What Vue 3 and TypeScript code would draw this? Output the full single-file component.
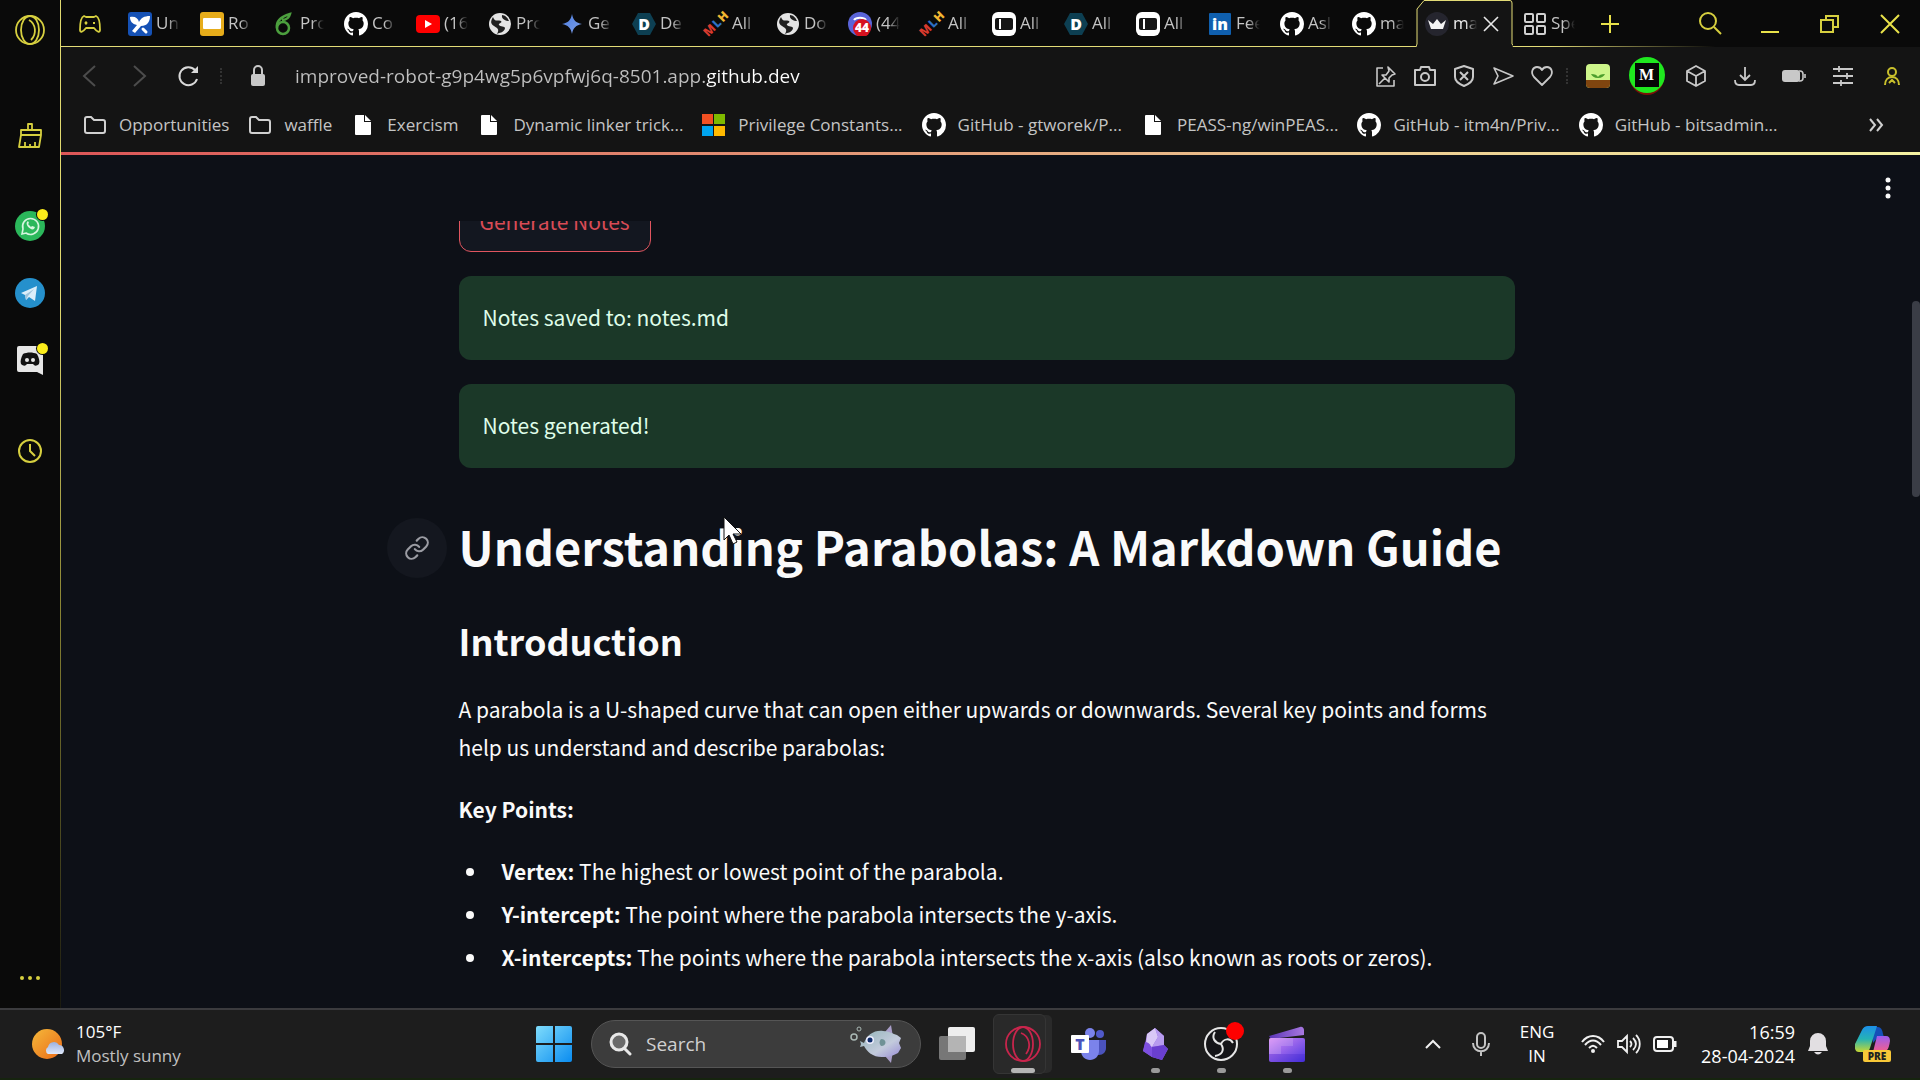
<script setup lang="ts">
interface Tab {
  icon: string
  label: string
}

interface Bookmark {
  icon: string
  label: string
}

interface Tool {
  icon: string
  name: string
}

const tabs: Tab[] = [
  { icon: 'unstop', label: 'Un' },
  { icon: 'slides', label: 'Ro' },
  { icon: 'overleaf', label: 'Pro' },
  { icon: 'github', label: 'Co' },
  { icon: 'youtube', label: '(16' },
  { icon: 'globe', label: 'Pro' },
  { icon: 'gemini', label: 'Ge' },
  { icon: 'devfolio', label: 'De' },
  { icon: 'mlh', label: 'All' },
  { icon: 'globe', label: 'Do' },
  { icon: 'discord-badge', label: '(44' },
  { icon: 'mlh', label: 'All' },
  { icon: 'panel', label: 'All' },
  { icon: 'devfolio', label: 'All' },
  { icon: 'panel', label: 'All' },
  { icon: 'linkedin', label: 'Fee' },
  { icon: 'github', label: 'Asl' },
  { icon: 'github', label: 'ma' },
]

// Letters that sit on top of a favicon's shape.
const marks: Record<string, string[]> = {
  devfolio: ['D'],
  mlh: ['M', 'L', 'H'],
  'discord-badge': ['44'],
  linkedin: ['in'],
  medium: ['M'],
  teams: ['T'],
}

const bookmarks: Bookmark[] = [
  { icon: 'folder', label: 'Opportunities' },
  { icon: 'folder', label: 'waffle' },
  { icon: 'file', label: 'Exercism' },
  { icon: 'file', label: 'Dynamic linker trick...' },
  { icon: 'microsoft', label: 'Privilege Constants...' },
  { icon: 'github', label: 'GitHub - gtworek/P...' },
  { icon: 'file', label: 'PEASS-ng/winPEAS...' },
  { icon: 'github', label: 'GitHub - itm4n/Priv...' },
  { icon: 'github', label: 'GitHub - bitsadmin...' },
]

const pageTools: Tool[] = [
  { icon: 'pin', name: 'Pin page' },
  { icon: 'camera', name: 'Snapshot' },
  { icon: 'shield', name: 'Ad blocker' },
  { icon: 'send', name: 'My Flow' },
  { icon: 'heart', name: 'Add to bookmarks' },
]

const extensions: Tool[] = [
  { icon: 'plant', name: 'Forest' },
  { icon: 'medium', name: 'Medium' },
  { icon: 'cube', name: 'Extensions' },
  { icon: 'download', name: 'Downloads' },
  { icon: 'battery', name: 'Battery saver' },
  { icon: 'sliders', name: 'Easy setup' },
  { icon: 'user', name: 'Profile' },
]

const taskApps = [
  { icon: 'taskview', name: 'Task view', state: '' },
  { icon: 'opera-red', name: 'Opera GX', state: 'active' },
  { icon: 'teams', name: 'Teams', state: '' },
  { icon: 'obsidian', name: 'Obsidian', state: 'open' },
  { icon: 'obs', name: 'OBS Studio', state: 'open' },
  { icon: 'clipchamp', name: 'Clipchamp', state: 'open' },
]

const keyPoints = [
  { term: 'Vertex:', text: 'The highest or lowest point of the parabola.' },
  { term: 'Y-intercept:', text: 'The point where the parabola intersects the y-axis.' },
  { term: 'X-intercepts:', text: 'The points where the parabola intersects the x-axis (also known as roots or zeros).' },
]

const address = 'improved-robot-g9p4wg5p6vpfwj6q-8501.app.github.dev'
</script>

<template>
  <div class="desktop">
    <svg class="sprite" aria-hidden="true">
      <defs>
        <linearGradient id="g-win" x1="0" y1="0" x2="1" y2="1">
          <stop offset="0" stop-color="#7fdcfb" /><stop offset="1" stop-color="#0a8cf0" />
        </linearGradient>
        <linearGradient id="g-sun" x1="0" y1="0" x2="1" y2="1">
          <stop offset="0" stop-color="#f5b93a" /><stop offset="1" stop-color="#ea6a18" />
        </linearGradient>
        <linearGradient id="g-cloud" x1="0" y1="0" x2="0" y2="1">
          <stop offset="0" stop-color="#9db2dd" /><stop offset="1" stop-color="#dfe8fb" />
        </linearGradient>
        <linearGradient id="g-gem" x1="0" y1="0" x2="1" y2="1">
          <stop offset="0" stop-color="#4a7de0" /><stop offset="1" stop-color="#7f9fe8" />
        </linearGradient>
        <linearGradient id="g-fish" x1="0" y1="0" x2="1" y2="1">
          <stop offset="0" stop-color="#93b4b8" /><stop offset="0.6" stop-color="#c3cbdc" /><stop offset="1" stop-color="#9a8fd6" />
        </linearGradient>
        <linearGradient id="g-clip" x1="0" y1="0" x2="1" y2="1">
          <stop offset="0" stop-color="#d88cf5" /><stop offset="1" stop-color="#4a35e0" />
        </linearGradient>
        <linearGradient id="g-clap" x1="0" y1="0" x2="1" y2="0">
          <stop offset="0" stop-color="#5b35b8" /><stop offset="1" stop-color="#a878e0" />
        </linearGradient>
        <linearGradient id="g-cop" x1="0" y1="0" x2="0" y2="1">
          <stop offset="0" stop-color="#1c8fe8" /><stop offset="0.5" stop-color="#25b3b5" /><stop offset="1" stop-color="#c8d832" />
        </linearGradient>
        <linearGradient id="g-cop2" x1="0" y1="0" x2="0" y2="1">
          <stop offset="0" stop-color="#9a5cf0" /><stop offset="1" stop-color="#f5608a" />
        </linearGradient>
      </defs>

      <symbol id="unstop" viewBox="0 0 24 24">
        <rect width="24" height="24" rx="3" fill="#1551b5" />
        <path d="M2 5c5-1 8 1 9 5 2-4 5-6 11-6 0 6-3 10-9 10l-6 7-3-2 5-6C4 12 2 9 2 5z" fill="#fff" />
        <path d="M15 17l3 3" stroke="#fff" stroke-width="3" stroke-linecap="round" />
      </symbol>
      <symbol id="slides" viewBox="0 0 24 24">
        <rect width="24" height="24" rx="3" fill="#e6ac1a" />
        <rect x="3" y="6" width="18" height="11" rx="1" fill="#fff" />
      </symbol>
      <symbol id="overleaf" viewBox="0 0 24 24">
        <g fill="none" stroke="#4c9f3e" stroke-width="2.500">
          <circle cx="11" cy="16" r="6" />
          <path d="M5 16C4 10 8 5 18 2c-1 4-4 6-8 6" />
        </g>
      </symbol>
      <symbol id="github" viewBox="0 0 16 16">
        <path fill="#fff" d="M8 0C3.58 0 0 3.58 0 8c0 3.54 2.29 6.53 5.47 7.59.4.07.55-.17.55-.38 0-.19-.01-.82-.01-1.49-2.01.37-2.53-.49-2.69-.94-.09-.23-.48-.94-.82-1.13-.28-.15-.68-.52-.01-.53.63-.01 1.08.58 1.23.82.72 1.21 1.87.87 2.33.66.07-.52.28-.87.51-1.07-1.78-.2-3.64-.89-3.64-3.95 0-.87.31-1.59.82-2.15-.08-.2-.36-1.02.08-2.12 0 0 .67-.21 2.2.82.64-.18 1.32-.27 2-.27s1.36.09 2 .27c1.53-1.04 2.2-.82 2.2-.82.44 1.1.16 1.92.08 2.12.51.56.82 1.27.82 2.15 0 3.07-1.87 3.75-3.65 3.95.29.25.54.73.54 1.48 0 1.07-.01 1.93-.01 2.2 0 .21.15.46.55.38A8.01 8.01 0 0 0 16 8c0-4.42-3.58-8-8-8z" />
      </symbol>
      <symbol id="youtube" viewBox="0 0 24 24">
        <rect y="3" width="24" height="18" rx="4" fill="#f00" />
        <path d="M9 8l7 4-7 4z" fill="#fff" />
      </symbol>
      <symbol id="globe" viewBox="0 0 24 24">
        <circle cx="12" cy="12" r="11" fill="#e4e4e4" />
        <path d="M5 5c2 6 6 2 8 4s-3 2-2 4 6 1 6 3-3 5-6 5l-2 1c3-5 0-6-3-8S2 10 5 5zM14 3c3 0 6 3 7 6-3 0-8-2-7-6z" fill="#202020" />
      </symbol>
      <symbol id="gemini" viewBox="0 0 24 24">
        <path d="M12 2c1 6 4 9 10 10-6 1-9 4-10 10-1-6-4-9-10-10 6-1 9-4 10-10z" fill="url(#g-gem)" />
      </symbol>
      <symbol id="devfolio" viewBox="0 0 24 24">
        <path d="M6 1h12l6 11-6 11H6L0 12z" fill="#0d3f52" />
      </symbol>
      <symbol id="mlh" viewBox="0 0 24 24"></symbol>
      <symbol id="discord-badge" viewBox="0 0 24 24">
        <circle cx="12" cy="12" r="12" fill="#5a64d8" />
        <path d="M6 8c2-3 10-3 12 0" stroke="#fff" stroke-width="2" fill="none" />
        <circle cx="14" cy="16" r="9" fill="#d6121f" />
      </symbol>
      <symbol id="panel" viewBox="0 0 24 24">
        <rect width="24" height="24" rx="6" fill="#fff" />
        <rect x="3" y="6" width="18" height="12" rx="2" fill="#151515" />
        <path d="M8 7v10" stroke="#fff" stroke-width="2" />
      </symbol>
      <symbol id="linkedin" viewBox="0 0 24 24">
        <rect x="1" y="1" width="22" height="22" rx="1" fill="#0f5fae" />
      </symbol>
      <symbol id="crown" viewBox="0 0 24 24">
        <circle cx="12" cy="12" r="12" fill="#25252e" />
        <path d="M3 8l5 4 4-5 4 5 5-4-3 9H6z" fill="#f4f4f4" />
      </symbol>
      <symbol id="speed" viewBox="0 0 24 24">
        <g fill="none" stroke="#cfcfcf" stroke-width="2">
          <rect x="2" y="2" width="8" height="8" rx="1" /><rect x="14" y="2" width="8" height="8" rx="1" />
          <rect x="2" y="14" width="8" height="8" rx="1" /><rect x="14" y="14" width="8" height="8" rx="1" />
        </g>
      </symbol>

      <symbol id="folder" viewBox="0 0 24 24">
        <path d="M2 6a2 2 0 0 1 2-2h4l3 3h9a2 2 0 0 1 2 2v9a2 2 0 0 1-2 2H4a2 2 0 0 1-2-2z" fill="none" stroke="#d0d0d0" stroke-width="2" />
      </symbol>
      <symbol id="file" viewBox="0 0 24 24">
        <path d="M5 2h8v7h7v12a1 1 0 0 1-1 1H5a1 1 0 0 1-1-1V3a1 1 0 0 1 1-1z" fill="#fff" />
        <path d="M14 2l6 6h-6z" fill="#fff" />
      </symbol>
      <symbol id="microsoft" viewBox="0 0 24 24">
        <path d="M0 1h11v10H0z" fill="#f25022" /><path d="M12 1h11v10H12z" fill="#7fba00" />
        <path d="M0 13h11v10H0z" fill="#00a4ef" /><path d="M12 13h11v10H12z" fill="#ffb900" />
      </symbol>

      <symbol id="pin" viewBox="0 0 24 24">
        <g fill="none" stroke="#c8c8c8" stroke-width="1.600" stroke-linejoin="round">
          <path d="M9 4H3v18h17v-6" /><path d="M14 3l7 7-3 1-3 3v4l-7-7h4l3-4zM11 14l-6 6" />
        </g>
      </symbol>
      <symbol id="camera" viewBox="0 0 24 24">
        <g fill="none" stroke="#c8c8c8" stroke-width="2" stroke-linejoin="round">
          <path d="M2 6h5l1-3h8l1 3h5v15H2z" /><circle cx="12" cy="13" r="4" />
        </g>
      </symbol>
      <symbol id="shield" viewBox="0 0 24 24">
        <g fill="none" stroke="#c8c8c8" stroke-width="2" stroke-linejoin="round">
          <path d="M12 2l9 3v8c0 4-4 7-9 9-5-2-9-5-9-9V5z" /><path d="M8 8l8 8M16 8l-8 8" />
        </g>
      </symbol>
      <symbol id="send" viewBox="0 0 24 24">
        <path d="M3 4l19 8-19 8 4-8z" fill="none" stroke="#c8c8c8" stroke-width="1.600" stroke-linejoin="round" />
      </symbol>
      <symbol id="heart" viewBox="0 0 24 24">
        <path d="M12 21L4 13C0 8 3 3 7 3c2 0 4 1 5 3 1-2 3-3 5-3 4 0 7 5 3 10z" fill="none" stroke="#c8c8c8" stroke-width="1.800" stroke-linejoin="round" />
      </symbol>
      <symbol id="plant" viewBox="0 0 24 24">
        <rect width="24" height="24" rx="4" fill="#cdf58a" />
        <path d="M0 16h24v4a4 4 0 0 1-4 4H4a4 4 0 0 1-4-4z" fill="#80450f" />
        <path d="M12 14c-4 0-6-2-7-4 4 0 6 1 7 3 1-2 3-3 7-3-1 2-3 4-7 4z" fill="#4b9d2c" />
      </symbol>
      <symbol id="medium" viewBox="0 0 36 38">
        <circle cx="18" cy="21" r="17" fill="#c01000" opacity="0.600" />
        <circle cx="18" cy="18" r="18" fill="#1fe81f" />
        <rect x="6" y="6" width="24" height="24" fill="#060606" />
      </symbol>
      <symbol id="cube" viewBox="0 0 24 24">
        <path d="M12 2l9 5v10l-9 5-9-5V7zM3 7l9 5 9-5M12 12v10" fill="none" stroke="#c8c8c8" stroke-width="1.800" stroke-linejoin="round" />
      </symbol>
      <symbol id="download" viewBox="0 0 24 24">
        <path d="M12 3v12M7 11l5 5 5-5M2 16c0 3 1 5 4 5h12c3 0 4-2 4-5" fill="none" stroke="#c8c8c8" stroke-width="1.800" />
      </symbol>
      <symbol id="battery" viewBox="0 0 24 24">
        <rect y="6" width="18" height="12" rx="3" fill="#c8c8c8" />
        <path d="M17 7h1q3 0 3 3v4q0 3-3 3h-1M23 10v4" fill="none" stroke="#c8c8c8" stroke-width="1.600" />
      </symbol>
      <symbol id="sliders" viewBox="0 0 24 24">
        <path d="M2 5h20M2 12h20M2 19h20M8 2v6M16 9v6M10 16v6" fill="none" stroke="#c8c8c8" stroke-width="1.800" />
      </symbol>
      <symbol id="user" viewBox="0 0 24 24">
        <g fill="none" stroke="#c9c02c" stroke-width="2">
          <circle cx="12" cy="8" r="4" /><path d="M5 21c0-5 3-8 7-8s7 3 7 8M9 19l3-3 3 3" />
        </g>
      </symbol>

      <symbol id="taskview" viewBox="0 0 36 36">
        <rect x="9" y="1" width="27" height="25" rx="2" fill="#eee" />
        <rect y="10" width="27" height="24" rx="2" fill="#777" />
        <path d="M9 10h18v16H9z" fill="#b4b4b4" />
      </symbol>
      <symbol id="opera-red" viewBox="0 0 36 36">
        <g fill="none" stroke="#c8254c" stroke-width="1.800">
          <circle cx="18" cy="18" r="17" /><ellipse cx="18" cy="18" rx="10" ry="17" />
          <path d="M16 7c8 3 11 13 5 21" />
        </g>
      </symbol>
      <symbol id="teams" viewBox="0 0 36 36">
        <circle cx="19" cy="7" r="5" fill="#7b83eb" /><circle cx="29" cy="8" r="4" fill="#5059c9" />
        <path d="M24 14h11v8c0 4-3 7-7 7h-4z" fill="#4b53bc" />
        <path d="M10 14h18v11c0 5-4 9-9 9s-9-4-9-9z" fill="#7b83eb" />
        <rect y="9" width="18" height="18" rx="1" fill="#fff" />
      </symbol>
      <symbol id="obsidian" viewBox="0 0 36 36">
        <path d="M18 2l9 8v9l4 4-6 11-10-3-9-6 2-7 2-10z" fill="#8d64e0" />
        <path d="M18 2l3 9-6 10-6-4 1-9z" fill="#d9c8f7" />
        <path d="M18 2l9 8v9l-12 2 6-10z" fill="#b79bef" />
        <path d="M8 16c5 0 8 6 7 15l-9-6z" fill="#7d4fe0" />
        <path d="M15 21l12-2 4 4-6 11-10-3z" fill="#6a3fd0" />
      </symbol>
      <symbol id="obs" viewBox="0 0 36 36" overflow="visible">
        <circle cx="18" cy="18" r="16" fill="#151518" stroke="#e6e6e6" stroke-width="2" />
        <path d="M12 6c-4 6 0 11 6 12 3-6 9-6 12-1M18 18c4 6 1 11-6 12" fill="none" stroke="#e6e6e6" stroke-width="2" />
        <circle cx="32" cy="5" r="9" fill="red" />
      </symbol>
      <symbol id="clipchamp" viewBox="0 0 36 36">
        <path d="M0 10l31-9c2-1 4 1 4 3v5L2 13z" fill="url(#g-clap)" />
        <rect y="12" width="36" height="24" rx="2" fill="url(#g-clip)" />
        <path d="M0 12h24v8H12v8H0z" fill="#fff" fill-opacity="0.150" />
        <path d="M0 28h36v6q0 2-2 2H2q-2 0-2-2z" fill="#2a10c0" fill-opacity="0.200" />
      </symbol>
    </svg>

    <div class="browser">
      <nav class="sidebar" aria-label="Browser sidebar">
        <button class="side logo" aria-label="Opera GX menu">
          <svg width="32" height="32" viewBox="0 0 32 32" fill="none" stroke="#d6cf3f" stroke-width="1.800">
            <circle cx="16" cy="16" r="14" /><ellipse cx="16" cy="16" rx="9" ry="14" /><path d="M15 6c7 4 8 14 2 20" />
          </svg>
        </button>
        <button class="side broom" aria-label="GX Cleaner">
          <svg width="26" height="26" viewBox="0 0 26 26" fill="none" stroke="#d6cf3f" stroke-width="1.800" stroke-linejoin="round">
            <path d="M11 7V1h4v6M4 7h20v5H4zM4 12L2 24h20l2-12M8 24v-5M13 24v-3M18 24v-5" />
          </svg>
        </button>
        <button class="side" aria-label="WhatsApp">
          <svg width="30" height="30" viewBox="0 0 30 30">
            <circle cx="15" cy="15" r="15" fill="#2bb85b" />
            <path d="M7 23l1-5a8 8 0 1 1 3 4z" fill="none" stroke="#d7f5df" stroke-width="1.600" />
            <path d="M12 11c-2 3 4 9 7 7l1-2-3-1-1 1-3-3 1-1-1-2z" fill="#d7f5df" />
          </svg>
          <i class="notice"></i>
        </button>
        <button class="side" aria-label="Telegram">
          <svg width="30" height="30" viewBox="0 0 30 30">
            <circle cx="15" cy="15" r="15" fill="#2590cc" />
            <path d="M6 15l16-7-2 15-6-4-3 3-1-5z" fill="#dceefa" /><path d="M10 17l9-6-6 7-2 4z" fill="#9fc4dc" />
          </svg>
        </button>
        <button class="side" aria-label="Discord">
          <svg width="30" height="30" viewBox="0 0 30 30">
            <path d="M2 3a2 2 0 0 1 2-2h24v29l-6-3H4a2 2 0 0 1-2-2z" fill="#e6e6e6" />
            <path d="M8 9c4-2 10-2 14 0 2 4 3 7 2 10-2 2-4 2-5 1l-1-1h-6l-1 1c-1 1-3 1-5-1-1-3 0-6 2-10z" fill="#111" />
            <circle cx="12" cy="15" r="2" fill="#e6e6e6" /><circle cx="18" cy="15" r="2" fill="#e6e6e6" />
          </svg>
          <i class="notice"></i>
        </button>
        <button class="side clock" aria-label="History">
          <svg width="26" height="26" viewBox="0 0 26 26" fill="none" stroke="#d6cf3f" stroke-width="2">
            <circle cx="13" cy="13" r="11" /><path d="M13 6v7l5 5" />
          </svg>
        </button>
        <button class="side more" aria-label="Sidebar setup">
          <svg width="24" height="6" viewBox="0 0 24 6" fill="#d6cf3f">
            <circle cx="4" cy="3" r="2" /><circle cx="12" cy="3" r="2" /><circle cx="20" cy="3" r="2" />
          </svg>
        </button>
      </nav>

      <div class="window">
        <header class="tabstrip">
          <button class="corner" aria-label="GX Corner">
            <svg width="24" height="20" viewBox="0 0 24 20" fill="none" stroke="#d6cf3f" stroke-width="1.800" stroke-linejoin="round">
              <path d="M6 2l2 1h8l2-1c3 1 4 8 4 14 0 3-3 2-6-2H8c-3 4-6 5-6 2C2 10 3 3 6 2z" /><path d="M7 8l2 2M9 8l-2 2M15 9h2" />
            </svg>
          </button>
          <button v-for="(tab, i) in tabs" :key="i" class="tab">
            <span class="favicon" :class="tab.icon">
              <svg><use :href="'#' + tab.icon" /></svg>
              <span v-if="marks[tab.icon]" class="mark"><b v-for="m in marks[tab.icon]" :key="m">{{ m }}</b></span>
            </span>
            <span class="tab-label">{{ tab.label }}</span>
          </button>
          <div class="tab current">
            <svg class="outline" width="97" height="47" viewBox="0 0 97 47">
              <path d="M0 47V46.500H1V9L8 .5H94Q96 .5 96 3V45L97 47z" fill="#141414" />
              <path d="M-2 46.500H0L1 44V9L8 .5H94Q96 .5 96 3V44L98 46.500" fill="none" stroke="#e3dc77" />
            </svg>
            <span class="favicon"><svg><use href="#crown" /></svg></span>
            <span class="tab-label">ma</span>
            <button class="close-tab" aria-label="Close tab">
              <svg width="16" height="16" viewBox="0 0 16 16" stroke="#e8e8e8" stroke-width="1.600"><path d="M1 1l14 14M15 1L1 15" /></svg>
            </button>
          </div>
          <button class="tab">
            <span class="favicon"><svg><use href="#speed" /></svg></span>
            <span class="tab-label">Spe</span>
          </button>
          <button class="new-tab" aria-label="New tab">
            <svg width="20" height="20" viewBox="0 0 20 20" stroke="#e9e24a" stroke-width="2"><path d="M10 1v18M1 10h18" /></svg>
          </button>
          <div class="controls">
            <button aria-label="Search tabs">
              <svg width="24" height="24" viewBox="0 0 24 24" fill="none" stroke="#d6cf3f" stroke-width="2"><circle cx="10" cy="9" r="8" /><path d="M16 15l7 7" /></svg>
            </button>
            <button aria-label="Minimize">
              <svg width="24" height="24" viewBox="0 0 24 24" stroke="#e9e24a" stroke-width="2"><path d="M3 20h18" /></svg>
            </button>
            <button aria-label="Restore">
              <svg width="24" height="24" viewBox="0 0 24 24" fill="none" stroke="#d6cf3f" stroke-width="2"><path d="M3 8h12v12H3zM8 8V4h12v11h-5" /></svg>
            </button>
            <button aria-label="Close">
              <svg width="24" height="24" viewBox="0 0 24 24" stroke="#e9e24a" stroke-width="2"><path d="M3 3l18 18M21 3L3 21" /></svg>
            </button>
          </div>
        </header>

        <div class="toolbar">
          <div class="history-nav">
            <button aria-label="Back">
              <svg width="24" height="24" viewBox="0 0 24 24" fill="none" stroke="#4c4c4c" stroke-width="2"><path d="M17 2L6 12l11 10" /></svg>
            </button>
            <button aria-label="Forward">
              <svg width="24" height="24" viewBox="0 0 24 24" fill="none" stroke="#4c4c4c" stroke-width="2"><path d="M7 2l11 10L7 22" /></svg>
            </button>
            <button aria-label="Reload">
              <svg width="24" height="24" viewBox="0 0 24 24" fill="none" stroke="#d8d8d8" stroke-width="2"><path d="M21 15a9 9 0 1 1-2-9" /><path d="M15 9l7-7v7z" fill="#d8d8d8" stroke="none" /></svg>
            </button>
          </div>
          <span class="divider"></span>
          <svg class="lock" width="24" height="24" viewBox="0 0 24 24"><path d="M8 11V6a4 4 0 0 1 8 0v5" fill="none" stroke="#c8c8c8" stroke-width="2" /><rect x="5" y="10" width="14" height="12" rx="2" fill="#c8c8c8" /></svg>
          <input class="address" type="text" :value="address" aria-label="Address" />
          <div class="page-tools">
            <button v-for="t in pageTools" :key="t.icon" :aria-label="t.name"><svg><use :href="'#' + t.icon" /></svg></button>
          </div>
          <span class="divider near"></span>
          <div class="extensions">
            <button v-for="t in extensions" :key="t.icon" :aria-label="t.name" :class="t.icon">
              <svg><use :href="'#' + t.icon" /></svg>
              <span v-if="marks[t.icon]" class="mark"><b v-for="m in marks[t.icon]" :key="m">{{ m }}</b></span>
            </button>
          </div>
        </div>

        <nav class="bookmarks" aria-label="Bookmarks">
          <a v-for="b in bookmarks" :key="b.label" href="#" class="bookmark">
            <svg><use :href="'#' + b.icon" /></svg><span>{{ b.label }}</span>
          </a>
          <button class="overflow" aria-label="More bookmarks">
            <svg width="16" height="14" viewBox="0 0 16 14" fill="none" stroke="#d0d0d0" stroke-width="2"><path d="M2 1l5 6-5 6M9 1l5 6-5 6" /></svg>
          </button>
        </nav>
        <div class="rainbow"></div>

        <div class="viewport">
          <div class="app-page">
            <div class="app-header">
              <button aria-label="Main menu">
                <svg width="6" height="22" viewBox="0 0 6 22" fill="#fafafa"><circle cx="3" cy="3" r="2.500" /><circle cx="3" cy="11" r="2.500" /><circle cx="3" cy="19" r="2.500" /></svg>
              </button>
            </div>
            <div class="scroller">
              <main class="notes">
                <button class="generate">Generate Notes</button>
                <div class="alert" role="alert">Notes saved to: notes.md</div>
                <div class="alert" role="alert">Notes generated!</div>
                <h1>
                  <a class="anchor" href="#" aria-label="Link to heading">
                    <svg width="26" height="26" viewBox="0 0 24 24" fill="none" stroke="#9b9ca3" stroke-width="2" stroke-linecap="round" stroke-linejoin="round"><path d="M10 13a5 5 0 0 0 7.540.540l3-3a5 5 0 0 0-7.070-7.070l-1.720 1.710" /><path d="M14 11a5 5 0 0 0-7.540-.540l-3 3a5 5 0 0 0 7.070 7.070l1.710-1.710" /></svg>
                  </a>
                  Understanding Parabolas: A Markdown Guide
                  <svg class="cursor" width="20" height="30" viewBox="0 0 20 30"><path d="M1 1v23l5-5 4 9 4-2-4-8h8z" fill="#fff" stroke="#111" /></svg>
                </h1>
                <h2>Introduction</h2>
                <p>A parabola is a U-shaped curve that can open either upwards or downwards. Several key points and forms help us understand and describe parabolas:</p>
                <p><strong>Key Points:</strong></p>
                <ul>
                  <li v-for="k in keyPoints" :key="k.term"><strong>{{ k.term }}</strong> {{ k.text }}</li>
                </ul>
              </main>
            </div>
          </div>
          <div class="scrollbar"><div class="thumb"></div></div>
        </div>
      </div>
    </div>

    <footer class="taskbar">
      <button class="weather">
        <svg width="36" height="32" viewBox="0 0 36 32">
          <circle cx="16" cy="16" r="15" fill="url(#g-sun)" />
          <path d="M17 26a4 4 0 0 1 0-7 6 6 0 0 1 11-2 5 5 0 0 1 3 9z" fill="url(#g-cloud)" />
        </svg>
        <span class="stack"><span>105°F</span><span class="dim">Mostly sunny</span></span>
      </button>

      <div class="dock">
        <button class="start" aria-label="Start">
          <svg width="36" height="36" viewBox="0 0 36 36"><path d="M2 0h15v17H0V2q0-2 2-2zM19 0h15q2 0 2 2v15H19zM0 19h17v17H2q-2 0-2-2zM19 19h17v15q0 2-2 2H19z" fill="url(#g-win)" /></svg>
        </button>
        <label class="search">
          <svg width="24" height="24" viewBox="0 0 24 24" fill="#6a6a6a" stroke="#e8e8e8" stroke-width="3" stroke-linecap="round"><circle cx="11" cy="10" r="8" /><path d="M17 17l5 5" /></svg>
          <input type="text" placeholder="Search" aria-label="Search" />
          <svg width="52" height="38" viewBox="0 0 52 38">
            <circle cx="4" cy="12" r="3" fill="none" stroke="#a9b8b4" stroke-width="1.500" /><circle cx="9" cy="4" r="2" fill="none" stroke="#a9b8b4" />
            <path d="M35 7l6-7 2 12zM35 31l6 7 2-12z" fill="#a99ec9" />
            <path d="M10 16l4 2c3-8 10-13 19-12 6 0 10 3 14 4l4 3-2 5 2 5-3 5c-4 2-8 4-14 4-10 1-17-5-20-11l-4 1 1-3z" fill="url(#g-fish)" />
            <path d="M31 14c6 0 6 7 0 7-2-2-2-5 0-7z" fill="#6f9296" />
            <circle cx="20" cy="15" r="4" fill="#eef" /><circle cx="20" cy="15" r="2.500" fill="#0c2a6a" />
          </svg>
        </label>
        <div class="apps">
          <button v-for="a in taskApps" :key="a.icon" class="task" :class="[a.state, a.icon]" :aria-label="a.name">
            <svg><use :href="'#' + a.icon" /></svg>
            <span v-if="marks[a.icon]" class="mark"><b v-for="m in marks[a.icon]" :key="m">{{ m }}</b></span>
          </button>
        </div>
      </div>

      <div class="tray">
        <button aria-label="Hidden icons"><svg width="18" height="12" viewBox="0 0 18 12" fill="none" stroke="#f0f0f0" stroke-width="2"><path d="M2 10l7-7 7 7" /></svg></button>
        <button class="mic" aria-label="Microphone"><svg width="20" height="26" viewBox="0 0 20 26" fill="none" stroke="#c4c4c4" stroke-width="2"><rect x="6" y="2" width="8" height="15" rx="4" /><path d="M2 12c0 11 16 11 16 0M10 20v5" /></svg></button>
        <button class="stack lang"><span>ENG</span><span>IN</span></button>
        <button class="status" aria-label="Network, volume and battery">
          <svg width="24" height="20" viewBox="0 0 24 20" fill="none" stroke="#f0f0f0" stroke-width="2"><path d="M1 8c6-8 16-8 22 0M4 11c5-6 11-6 16 0M8 14c3-3 5-3 8 0" /><circle cx="12" cy="17" r="2" fill="#f0f0f0" stroke="none" /></svg>
          <svg width="24" height="22" viewBox="0 0 24 22" fill="none" stroke="#f0f0f0" stroke-width="1.800"><path d="M1 8h4l5-5v16l-5-5H1zM13 8c2 2 2 4 0 6M16 5c4 4 4 8 0 12M19 2c5 5 5 13 0 18" /></svg>
          <svg width="24" height="18" viewBox="0 0 24 18"><rect x="1" y="2" width="19" height="14" rx="3" fill="none" stroke="#f0f0f0" stroke-width="2" /><rect x="4" y="5" width="11" height="8" fill="#fff" /><path d="M22 6v6" stroke="#f0f0f0" stroke-width="3" /></svg>
        </button>
        <button class="stack clock-text"><span>16:59</span><span>28-04-2024</span></button>
        <button class="bell" aria-label="Notifications"><svg width="20" height="24" viewBox="0 0 20 24" fill="#e2dfe2"><path d="M0 19l2-5V9a8 8 0 0 1 16 0v5l2 5zM6 20h8q-4 5-8 0z" /></svg></button>
        <button class="copilot" aria-label="Copilot preview">
          <svg width="36" height="36" viewBox="0 0 36 36">
            <path d="M16 1h7q4 0 5 7l1 3h-6l-5 6z" fill="#1450b8" />
            <path d="M22 10h9q4 0 4 5-1 7-3 9l-14 2z" fill="url(#g-cop2)" />
            <path d="M7 4q2-4 6-4h9l-7 22q-1 4-6 4H4q-5 0-4-8z" fill="url(#g-cop)" />
            <rect x="8" y="24" width="28" height="12" rx="2" fill="#f8c838" />
            <text x="22" y="34" text-anchor="middle" font-family="Open Sans, sans-serif" font-size="10" font-weight="800" fill="#222">PRE</text>
          </svg>
        </button>
      </div>
    </footer>
  </div>
</template>

<style>
body {
  background: #0a0a0a;
}
</style>

<style scoped>
.desktop {
  display: flex;
  flex-direction: column;
  height: 100vh;
  overflow: hidden;
  font-family: 'Open Sans', 'Noto Sans', sans-serif;
  font-size: 17px;
  color: #c4c4c4;
}
.desktop *,
.desktop *::before,
.desktop *::after {
  box-sizing: border-box;
}
.sprite {
  position: absolute;
  width: 0;
  height: 0;
}
svg {
  display: block;
  flex: none;
}
button {
  display: flex;
  align-items: center;
  justify-content: center;
  padding: 0;
  border: 0;
  background: none;
  font: inherit;
  color: inherit;
}
.browser {
  display: flex;
  flex: 1;
  min-height: 0;
}

.sidebar {
  display: flex;
  flex-direction: column;
  width: 61px;
  flex: none;
  background: #0a0a0a;
  border-right: 1px solid;
  border-image: linear-gradient(#e0d970 30%, #8a8534 60%, #1a1a10) 1;
}
.side {
  position: relative;
  width: 60px;
  height: 67px;
}
.logo {
  height: 60px;
}
.broom {
  margin: 42px 0 23px;
}
.clock {
  margin-top: 24px;
}
.more {
  margin-top: auto;
  height: 60px;
}
.notice {
  position: absolute;
  top: 17px;
  right: 12px;
  width: 11px;
  height: 11px;
  border-radius: 50%;
  background: #fbec1b;
  box-shadow: 0 0 0 1px #0a0a0a;
}

.window {
  display: flex;
  flex-direction: column;
  flex: 1;
  min-width: 0;
  background: #141414;
}
.tabstrip {
  display: flex;
  align-items: center;
  height: 47px;
  flex: none;
  background:
    linear-gradient(90deg, #e3dc77 80%, #e3dc7700 89%) bottom / 100% 1px no-repeat,
    #0a0a0a;
}
.corner {
  width: 57px;
}
.tab {
  position: relative;
  display: flex;
  align-items: center;
  justify-content: flex-start;
  gap: 4px;
  flex: 0 1 72px;
  height: 46px;
  padding-left: 10px;
  overflow: hidden;
}
.favicon {
  position: relative;
  display: block;
  flex: none;
  width: 24px;
  height: 24px;
}
.favicon svg {
  width: 24px;
  height: 24px;
}
.mark {
  position: absolute;
  inset: 0;
  display: flex;
  align-items: center;
  justify-content: center;
  color: #fff;
  font-weight: 700;
  font-size: 16px;
  line-height: 24px;
}
.discord-badge .mark {
  inset: 4px 0 -4px 4px;
  font-size: 12px;
}
.mlh .mark {
  gap: 1px;
  rotate: -45deg;
  font-size: 12px;
  font-weight: 800;
}
.mlh b:nth-child(1) {
  color: #d93a2e;
}
.mlh b:nth-child(2) {
  color: #2d6fc4;
}
.mlh b:nth-child(3) {
  color: #f2b632;
}
.tab-label {
  position: relative;
  width: 24px;
  overflow: hidden;
  text-align: left;
  line-height: 24px;
  padding-bottom: 2px;
  white-space: nowrap;
  mask-image: linear-gradient(90deg, #000 50%, #0003 90%, transparent);
}
.current {
  flex: 0 0 97px;
  height: 47px;
  margin-left: 2px;
  padding-left: 9px;
  overflow: visible;
  color: #f0f0f0;
}
.outline {
  position: absolute;
  inset: 0;
}
.close-tab {
  position: relative;
  margin-left: 2px;
}
.new-tab {
  width: 49px;
}
.controls {
  display: flex;
  margin-left: auto;
}
.controls button {
  width: 60px;
  height: 40px;
}

.toolbar {
  display: flex;
  align-items: center;
  height: 58px;
  flex: none;
  padding-left: 4px;
}
.history-nav {
  display: flex;
}
.history-nav button {
  width: 49px;
}
.divider {
  height: 16px;
  margin: 0 8px;
  border-left: 2px dotted #333;
}
.divider.near {
  margin: 0 5px;
}
.lock {
  margin-left: 16px;
}
.address {
  flex: 1;
  min-width: 0;
  margin-left: 25px;
  padding: 0;
  border: 0;
  outline: 0;
  background: linear-gradient(90deg, #c0c0c0 411px, #fff 411px);
  background-clip: text;
  color: transparent;
  font: inherit;
  font-size: 19px;
}
.page-tools {
  display: flex;
}
.page-tools button {
  width: 39px;
}
.page-tools svg,
.extensions svg {
  width: 24px;
  height: 24px;
}
.extensions {
  display: flex;
  align-items: center;
  padding-right: 4px;
}
.extensions button {
  position: relative;
  width: 49px;
}
.extensions .medium svg {
  width: 36px;
  height: 38px;
}
.medium .mark {
  padding-bottom: 2px;
  font-family: 'Liberation Serif', serif;
}

.bookmarks {
  display: flex;
  align-items: center;
  gap: 19px;
  height: 47px;
  flex: none;
  padding: 0 36px 8px 22px;
}
.bookmark {
  display: flex;
  align-items: center;
  gap: 12px;
  color: inherit;
  text-decoration: none;
  white-space: nowrap;
}
.bookmark svg {
  width: 24px;
  height: 24px;
}
.overflow {
  margin-left: auto;
}
.rainbow {
  height: 3px;
  flex: none;
  background: linear-gradient(90deg, #dc5658, #e18a70 35%, #eccb92 70%, #f4f2a2);
}

.viewport {
  display: flex;
  flex: 1;
  min-height: 0;
  background: #0d1017;
  color: #fafafa;
}
.app-page {
  display: flex;
  flex-direction: column;
  flex: 1;
  min-width: 0;
}
.app-header {
  display: flex;
  justify-content: flex-end;
  align-items: center;
  height: 66px;
  flex: none;
  padding-right: 21px;
}
.scroller {
  flex: 1;
  min-height: 0;
  overflow: hidden;
}
.notes {
  display: flex;
  flex-direction: column;
  align-items: stretch;
  max-width: 1056px;
  margin: -26px auto 0;
  font-family: 'Noto Sans CJK SC', 'Open Sans', sans-serif;
  font-size: 21px;
  line-height: 38px;
}
.generate {
  align-self: flex-start;
  height: 57px;
  padding: 0 20px 6px;
  border: 1px solid #e0555f;
  border-radius: 12px;
  background: #131720;
  color: #d94b55;
}
.alert {
  margin-top: 24px;
  padding: 22px 24px 24px;
  border-radius: 12px;
  background: #1b3828;
  color: #dffde9;
}
h1,
h2,
p,
ul {
  margin: 0;
}
h1 {
  position: relative;
  margin-top: 46px;
  font-size: 47px;
  line-height: 64px;
  white-space: nowrap;
}
.anchor {
  position: absolute;
  top: 4px;
  left: -72px;
  display: flex;
  align-items: center;
  justify-content: center;
  width: 60px;
  height: 60px;
  border-radius: 50%;
  background: #14171f;
}
.cursor {
  position: absolute;
  top: 2px;
  left: 264px;
}
h2 {
  margin: 34px 0 6px;
  font-size: 36px;
  line-height: 56px;
}
p {
  margin: 16px 0 8px;
}
ul {
  margin-top: 16px;
  padding-left: 30px;
}
li {
  margin-bottom: 5px;
  padding-left: 13px;
}
.scrollbar {
  width: 8px;
  padding-top: 146px;
}
.thumb {
  height: 196px;
  border-radius: 4px;
  background: #3a3d46;
}

.taskbar {
  display: flex;
  align-items: center;
  height: 72px;
  flex: none;
  border-top: 2px solid #3b3b3e;
  border-bottom: 2px solid #16240f;
  background: #1d1d1d;
  color: #fff;
}
.stack {
  display: flex;
  flex-direction: column;
  line-height: 24px;
}
.dim {
  color: #c0c0c0;
}
.weather {
  gap: 9px;
  padding-left: 31px;
  text-align: left;
}
.dock {
  display: flex;
  align-items: center;
  margin-left: auto;
}
.search {
  display: flex;
  align-items: center;
  width: 330px;
  height: 48px;
  margin: 0 3px 0 19px;
  padding: 0 18px 0 16px;
  border: 1px solid #555;
  border-radius: 24px;
  background: #3c3c3c;
}
.search input {
  flex: 1;
  min-width: 0;
  margin-left: 14px;
  padding: 0;
  border: 0;
  outline: 0;
  background: none;
  color: #ddd;
  font: inherit;
  font-size: 19px;
}
.search input::placeholder {
  color: #d0d0d0;
}
.apps {
  display: flex;
}
.task {
  position: relative;
  width: 66px;
  height: 60px;
}
.task svg {
  width: 36px;
  height: 36px;
  overflow: visible;
}
.teams .mark {
  inset: 0 18px 0 0;
  color: #4b53bc;
}
.task.active::before {
  content: '';
  position: absolute;
  inset: 0 10px 0 3px;
  border: 1px solid #353535;
  border-radius: 6px;
  background: #292929;
  box-shadow: 7px 0 0 -1px #2a2a2a;
}
.task.active svg {
  position: relative;
}
.task.open::after,
.task.active::after {
  content: '';
  position: absolute;
  bottom: 1px;
  width: 9px;
  height: 5px;
  border-radius: 3px;
  background: #9a9a9a;
}
.task.active::after {
  width: 24px;
  background: #b5b5b5;
}
.tray {
  display: flex;
  align-items: center;
  justify-content: flex-end;
  width: 600px;
  padding-right: 29px;
}
.mic {
  margin: 0 26px 0 29px;
}
.lang {
  width: 40px;
}
.status {
  gap: 12px;
  margin: 0 24px;
}
.clock-text {
  align-items: flex-end;
  font-size: 18px;
}
.bell {
  margin: 0 27px 0 13px;
}
</style>
